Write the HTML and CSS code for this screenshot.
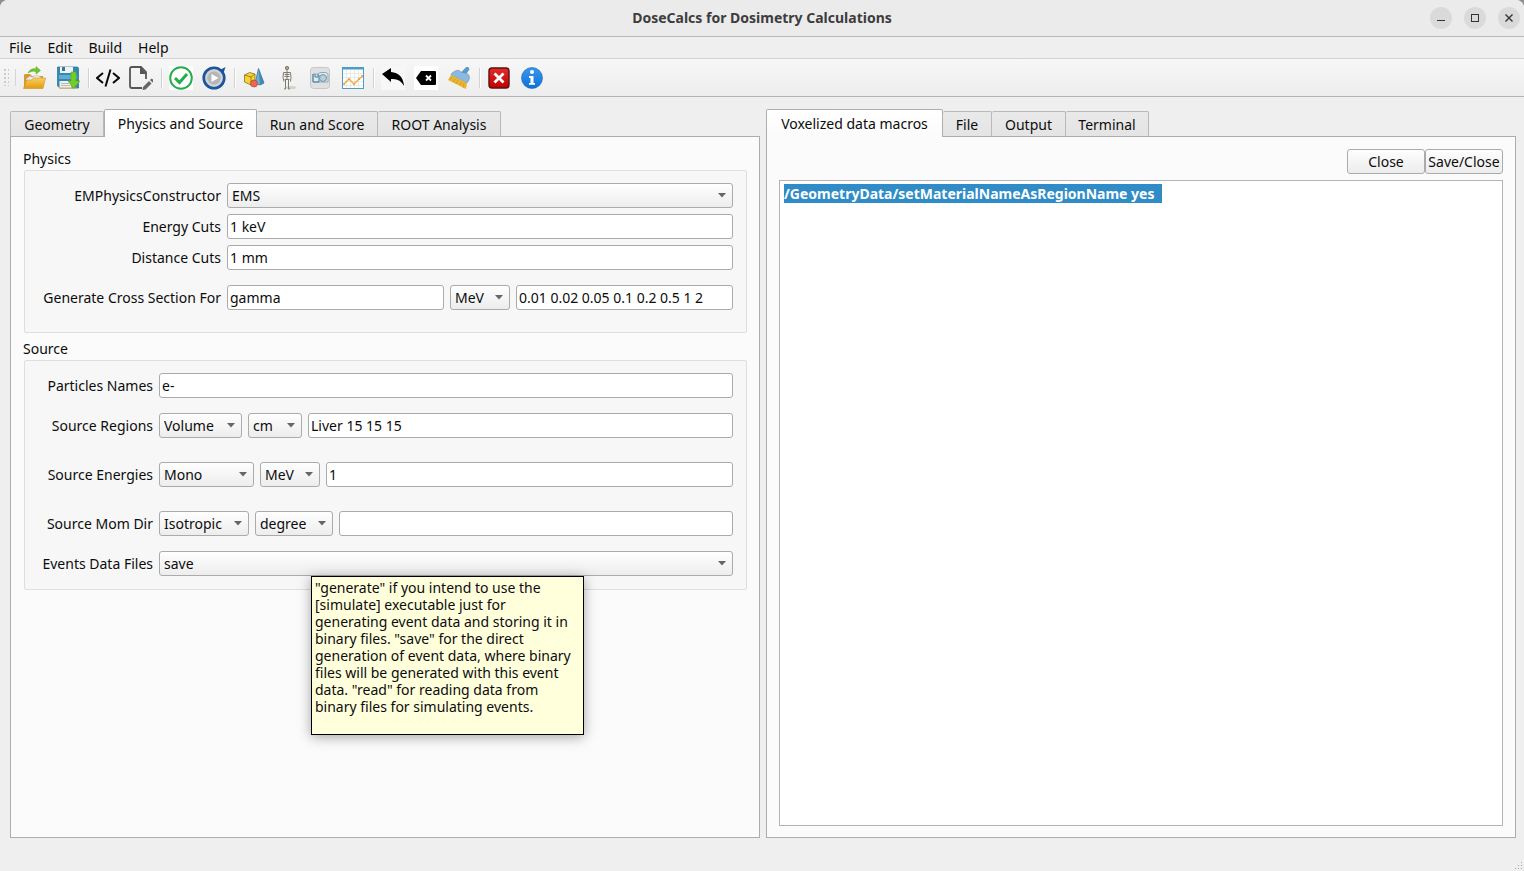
FILE: index.html
```
<!DOCTYPE html>
<html lang="en">
<head>
<meta charset="utf-8">
<title>DoseCalcs for Dosimetry Calculations</title>
<link rel="stylesheet" href="styles.css">
</head>
<body>
<div class="window">
  <header class="titlebar">
    <h1 class="title">DoseCalcs for Dosimetry Calculations</h1>
    <div class="window-buttons">
      <button class="winbtn" aria-label="Minimize"><svg width="22" height="22" viewBox="0 0 22 22"><path d="M7 13.500h8" stroke="#333" fill="none"/></svg></button>
      <button class="winbtn" aria-label="Maximize"><svg width="22" height="22" viewBox="0 0 22 22"><rect x="7.500" y="7.500" width="7" height="7" stroke="#333" fill="none"/></svg></button>
      <button class="winbtn" aria-label="Close window"><svg width="22" height="22" viewBox="0 0 22 22"><path d="M7.500 7.500l7 7M14.500 7.500l-7 7" stroke="#333" stroke-width="1.400" fill="none"/></svg></button>
    </div>
  </header>
  <nav class="menubar">
    <button class="menu">File</button><button class="menu">Edit</button><button class="menu">Build</button><button class="menu">Help</button>
  </nav>
  <div class="toolbar" role="toolbar">
    <span class="grip"></span>
    <button class="tool" aria-label="Open"><svg width="24" height="24" viewBox="0 0 24 24"><defs><linearGradient id="fold" x1="0" y1="0" x2="0" y2="1"><stop offset="0" stop-color="#f9cf62"/><stop offset="1" stop-color="#e29c10"/></linearGradient></defs><path d="M1 22V9l1-1h5l2 2h11v12z" fill="#d59a2c"/><path d="M3 13l4-3 2 1 5-2 5 3v3H3z" fill="#e8edf0" stroke="#aaa" stroke-width=".5"/><path d="M.5 22.500L3.500 14h5l2-2h12L20 22.500z" fill="url(#fold)" stroke="#d4921b" stroke-width=".6"/><path d="M5 7c2-4 5-5 8-4V.5L17.500 4.500 13 8V5.500C10 5 8 5 5 7z" fill="#6cc82b" stroke="#56a81f" stroke-width=".5"/></svg></button>
    <button class="tool" aria-label="Save"><svg width="24" height="24" viewBox="0 0 24 24"><path d="M1.500 1h20l1 1v20H4l-2.500-2z" fill="#3389b4" stroke="#246f96" stroke-width=".7"/><path d="M4 1h13v6H4z" fill="#eef3f5"/><path d="M6 1h3v4H6z" fill="#39779a"/><path d="M3 9h18v4H3z" fill="#62acd0"/><path d="M3.500 15h12v7h-12z" fill="#eee"/><path d="M5 17.500h8M5 19.500h9" stroke="#bbb"/><path d="M3 22h18" stroke="#d8a94e"/><path d="M15 6h5v9h4l-6.500 7.500L12 15h3z" fill="#72cd25" stroke="#58ad19" stroke-width=".6"/></svg></button>
    <span class="sep"></span>
    <button class="tool" aria-label="Show code"><svg width="24" height="24" viewBox="0 0 24 24"><path d="M7 7l-6 5 6 5M17 7l6 5-6 5M14.500 3.500l-5 17" fill="none" stroke="#080808" stroke-width="2"/></svg></button>
    <button class="tool" aria-label="Edit file"><svg width="24" height="24" viewBox="0 0 24 24"><path d="M13 22H3Q1 22 1 20V3Q1 1 3 1h9l5 5v7" fill="none" stroke="#555" stroke-width="1.800"/><path d="M11 1l7 7h-7z" fill="#555"/><path d="M14 21l6-6 2.500 2.500-6 6-3 .5zM21 14l1-1q1-.5 2 .5t.5 2L23.500 16.500z" fill="#666"/></svg></button>
    <span class="sep"></span>
    <button class="tool" aria-label="Check"><svg width="24" height="24" viewBox="0 0 24 24"><path d="M0 0h24v24H0z" fill="#fff"/><circle cx="12" cy="12" r="10.800" fill="#fff" stroke="#25ad4b" stroke-width="2"/><path d="M6 12l4.500 4.500L18 8" fill="none" stroke="#25ad4b" stroke-width="3"/></svg></button>
    <button class="tool" aria-label="Run"><svg width="24" height="24" viewBox="0 0 24 24"><defs><radialGradient id="disc"><stop offset="0" stop-color="#aaa"/><stop offset=".8" stop-color="#d6d6d6"/><stop offset="1" stop-color="#8c9199"/></radialGradient></defs><path d="M18 4l5.500-3-2 6z" fill="#214f91"/><circle cx="12" cy="12" r="10.300" fill="url(#disc)" stroke="#1c559f" stroke-width="2.600"/><circle cx="12" cy="12" r="6.500" fill="#b4b6b9"/><path d="M9.500 8l7 4-7 4z" fill="#fff"/></svg></button>
    <span class="sep"></span>
    <button class="tool" aria-label="Geometry shapes"><svg width="24" height="24" viewBox="0 0 24 24"><path d="M16.500 2.500l5.500 14.500-4 2-5-1.500z" fill="#6db1d9" stroke="#33647f" stroke-width=".7"/><path d="M16.500 2.500l1.500 16.500 4-2z" fill="#4288b3"/><path d="M2.500 9l5-2.500L13 8v8l-4 3-6.500-3z" fill="#f7d235" stroke="#77641d" stroke-width=".7"/><path d="M2.500 9l6.500 2 4-3M9 11v8" fill="none" stroke="#77641d" stroke-width=".7"/><circle cx="12" cy="17.500" r="3.500" fill="#f0674f" stroke="#9c3c2b" stroke-width=".6"/></svg></button>
    <button class="tool" aria-label="Phantom"><svg width="24" height="24" viewBox="0 0 24 24"><ellipse cx="16" cy="21.500" rx="5" ry="1.500" fill="#d0d0d0"/><g fill="none" stroke="#817b6c"><circle cx="12" cy="2" r="1.700" fill="#aaa490"/><path d="M12 4v10M8.500 6.500h7M9.500 8.500h5M9.500 10.500h5M8.500 6.500l-.5 5 1 4M15.500 6.500l.5 5-.5 4M9.500 13.500h5M10.500 14v9H9M13.500 14v9H15"/></g></svg></button>
    <button class="tool" aria-label="Capture view"><svg width="24" height="24" viewBox="0 0 24 24"><rect x="2.500" y="1.500" width="19" height="21" rx="3" fill="#e0e0e0" stroke="#c7c7c7"/><path d="M5 8h5l2-1.500h6l2 1.500v8H5z" fill="#dcebf2" stroke="#8aabbd"/><path d="M5 8v8h6V9M7 8v3h3V8" fill="none" stroke="#477c9c"/><circle cx="15" cy="12" r="3.500" fill="#b8ced9" stroke="#7796a6"/></svg></button>
    <button class="tool" aria-label="Graph"><svg width="24" height="24" viewBox="0 0 24 24"><rect x="1.500" y="1.500" width="21" height="21" fill="#fff" stroke="#4b9cc6"/><path d="M1 2.500h22" stroke="#4b9cc6" stroke-width="2"/><path d="M5.500 4v18M9.500 4v18M13.500 4v18M17.500 4v18M2 7.500h20M2 11.500h20M2 15.500h20M2 19.500h20" stroke="#ddd" stroke-width=".6"/><path d="M3 18l5-5 5 5 5-5 4-3" fill="none" stroke="#efae36" stroke-width="1.300"/><g fill="#ee9846"><circle cx="3" cy="18" r="1"/><circle cx="8" cy="13" r="1"/><circle cx="13" cy="18" r="1"/><circle cx="18" cy="13" r="1"/><circle cx="21" cy="10" r="1"/></g></svg></button>
    <span class="sep"></span>
    <button class="tool" aria-label="Undo"><svg width="24" height="24" viewBox="0 0 24 24"><path d="M0 0h24v24H0z" fill="#f7f7f7"/><path d="M1 8l9-6v4q12 1 13 14-4-8-13-7v3z" fill="#000"/></svg></button>
    <button class="tool" aria-label="Clear"><svg width="24" height="24" viewBox="0 0 24 24"><path d="M0 0h24v24H0z" fill="#fff"/><path d="M2 12l5-7h14q1 0 1 1v12q0 1-1 1H7z" fill="#000"/><path d="M12 9.500l5 5M17 9.500l-5 5" stroke="#fff" stroke-width="1.800"/></svg></button>
    <button class="tool" aria-label="Clean"><svg width="24" height="24" viewBox="0 0 24 24"><path d="M14 7l5-5.500q3-1 3 2L18 9z" fill="#5b9bd1" stroke="#3b78ae" stroke-width=".5"/><path d="M5 7q6-5 9-1l4 1q6 1 4 7l-2 3L4 9z" fill="#8bb9e0" stroke="#5684b0" stroke-width=".5"/><path d="M4 9l16 8-1 6L1 14z" fill="#e9b52f"/><path d="M5 11l-2 3M8 13l-2 3M11 14l-2 4M14 16l-1 4M17 17l-1 5" stroke="#c9941e" stroke-width=".6"/></svg></button>
    <span class="sep"></span>
    <button class="tool" aria-label="Exit"><svg width="24" height="24" viewBox="0 0 24 24"><defs><linearGradient id="red" x1="0" y1="0" x2="0" y2="1"><stop offset="0" stop-color="#e12d2d"/><stop offset="1" stop-color="#c00000"/></linearGradient></defs><rect x="2" y="2" width="20" height="20" rx="3" fill="url(#red)" stroke="#5d1010" stroke-width="1.400"/><path d="M7.500 7.500l9 9M16.500 7.500l-9 9" stroke="#fff" stroke-width="2.800"/></svg></button>
    <button class="tool" aria-label="About"><svg width="24" height="24" viewBox="0 0 24 24"><defs><linearGradient id="blue" x1="0" y1="0" x2="0" y2="1"><stop offset="0" stop-color="#3b97ec"/><stop offset="1" stop-color="#0b72da"/></linearGradient></defs><circle cx="12" cy="12" r="10.500" fill="url(#blue)" stroke="#1766b7" stroke-width=".6"/><circle cx="12" cy="6" r="2" fill="#fff"/><path d="M9 10h4.500v7H15v1.800H9V17h1.500v-5H9z" fill="#fff"/></svg></button>
  </div>

  <main class="workspace">
    <section class="pane">
      <div class="tabs" role="tablist">
        <button class="tab w-geometry" role="tab">Geometry</button>
        <button class="tab w-physics active" role="tab" aria-selected="true">Physics and Source</button>
        <button class="tab w-run" role="tab">Run and Score</button>
        <button class="tab w-root" role="tab">ROOT Analysis</button>
      </div>
      <div class="page">
        <h2 class="group-title">Physics</h2>
        <div class="group physics">
          <div class="row"><label for="em">EMPhysicsConstructor</label><select id="em" class="grow"><option>EMS</option></select></div>
          <div class="row"><label for="ecut">Energy Cuts</label><input id="ecut" type="text" value="1 keV"></div>
          <div class="row"><label for="dcut">Distance Cuts</label><input id="dcut" type="text" value="1 mm"></div>
          <div class="row spaced"><label for="cross">Generate Cross Section For</label><input id="cross" type="text" value="gamma"><select class="w-mev" aria-label="Cross section unit"><option>MeV</option></select><input type="text" aria-label="Cross section energies" value="0.01 0.02 0.05 0.1 0.2 0.5 1 2"></div>
        </div>
        <h2 class="group-title">Source</h2>
        <div class="group source">
          <div class="row"><label for="part">Particles Names</label><input id="part" type="text" value="e-"></div>
          <div class="row spaced"><label for="reg">Source Regions</label><select id="reg" class="w-volume"><option>Volume</option></select><select class="w-cm" aria-label="Length unit"><option>cm</option></select><input type="text" aria-label="Region values" value="Liver 15 15 15"></div>
          <div class="row wide-spaced"><label for="ene">Source Energies</label><select id="ene" class="w-mono"><option>Mono</option></select><select class="w-mev" aria-label="Energy unit"><option>MeV</option></select><input type="text" aria-label="Energy values" value="1"></div>
          <div class="row wide-spaced"><label for="mom">Source Mom Dir</label><select id="mom" class="w-iso"><option>Isotropic</option></select><select class="w-degree" aria-label="Angle unit"><option>degree</option></select><input type="text" aria-label="Direction values"></div>
          <div class="row spaced tip-anchor"><label for="evt">Events Data Files</label><select id="evt" class="grow" aria-describedby="tip"><option>save</option></select>
            <div class="tooltip" id="tip" role="tooltip">"generate" if you intend to use the<br>[simulate] executable just for<br>generating event data and storing it in<br>binary files. "save" for the direct<br>generation of event data, where binary<br>files will be generated with this event<br>data. "read" for reading data from<br>binary files for simulating events.</div>
          </div>
        </div>
      </div>
    </section>

    <section class="pane">
      <div class="tabs" role="tablist">
        <button class="tab w-voxel active" role="tab" aria-selected="true">Voxelized data macros</button>
        <button class="tab w-file" role="tab">File</button>
        <button class="tab w-output" role="tab">Output</button>
        <button class="tab w-terminal" role="tab">Terminal</button>
      </div>
      <div class="page page-editor">
        <div class="actions"><button class="push">Close</button><button class="push">Save/Close</button></div>
        <textarea class="editor" id="editor" aria-label="Macros" spellcheck="false">/GeometryData/setMaterialNameAsRegionName yes  </textarea>
      </div>
    </section>
  </main>
  <footer class="statusbar"><svg width="8" height="8" viewBox="0 0 8 8"><path d="M6 0h1v1H6zM3 3h1v1H3zM6 3h1v1H6zM0 6h1v1H0zM3 6h1v1H3zM6 6h1v1H6z" fill="#aaa"/></svg></footer>
</div>
<script src="script.js"></script>
</body>
</html>
```
FILE: styles.css
```
* { box-sizing: border-box; }
body {
  margin: 0;
  background: #8f8f8f;
  color: #0c0c0c;
  font: 14px/20px "Noto Sans", "Open Sans", sans-serif;
}
button, input, select, textarea { font: inherit; color: inherit; margin: 0; }
.window {
  display: flex;
  flex-direction: column;
  height: 100vh;
  background: #efefef;
  border-radius: 8px 8px 0 0;
  overflow: hidden;
}

.titlebar {
  display: grid;
  grid-template-columns: 1fr auto 1fr;
  align-items: center;
  height: 37px;
  background: #ebebeb;
  border-bottom: 1px solid #bababa;
}
.title { grid-column: 2; margin: 0; font-size: 14px; line-height: 20px; font-weight: 700; color: #3d3d3d; }
.window-buttons { display: flex; justify-content: flex-end; gap: 12px; padding-right: 4px; }
.winbtn { display: flex; width: 22px; height: 22px; padding: 0; border: 0; border-radius: 50%; background: #dadada; }

.menubar { display: flex; gap: 16px; height: 22px; padding-left: 9px; border-bottom: 1px solid #d3d3d3; }
.menu { padding: 0; border: 0; background: none; line-height: 20px; }

.toolbar {
  display: flex;
  align-items: center;
  height: 38px;
  background: linear-gradient(#f7f7f7, #ededed);
  border-bottom: 1px solid #b4b4b4;
}
.grip {
  width: 12px;
  height: 17px;
  margin: 0 2px 0 4px;
  border-right: 1px solid #d5d5d5;
  background: radial-gradient(circle at 1px 1px, #ccc 1px, transparent 1px) 0 0 / 4px 4px;
  background-clip: content-box;
  padding-right: 6px;
}
.tool { display: flex; align-items: center; justify-content: center; width: 33px; height: 33px; padding: 0; border: 0; background: none; }
.sep { width: 2px; height: 20px; margin: 0 1px 0 4px; border-left: 1px solid #d2d2d2; border-right: 1px solid #fff; }

.workspace { flex: 1; display: flex; gap: 6px; min-height: 0; padding: 12px 8px 0 10px; }
.pane { flex: 1; display: flex; flex-direction: column; min-width: 0; }
.tabs { display: flex; align-items: flex-end; }
.tab {
  height: 25px;
  padding: 2px 0 0;
  border: 1px solid #b9b9b9;
  border-left-width: 0;
  border-bottom: 0;
  border-radius: 2px 2px 0 0;
  background: linear-gradient(#e9e9e9, #e4e4e4);
  white-space: nowrap;
}
.tab:first-child { border-left-width: 1px; }
.tab.active {
  z-index: 1;
  height: 28px;
  margin-bottom: -1px;
  padding: 0;
  border-left-width: 1px;
  border-color: #aeaeae;
  background: linear-gradient(#fff, #fbfbfb);
}
.w-geometry { width: 94px; }
.w-physics { width: 153px; }
.w-run { width: 121px; }
.w-root { width: 123px; }
.w-voxel { width: 177px; }
.w-file { width: 49px; }
.w-output { width: 74px; }
.w-terminal { width: 83px; }

.page {
  flex: 1;
  display: flex;
  flex-direction: column;
  min-height: 0;
  padding: 12px;
  border: 1px solid #adadad;
  background: #fbfbfb;
}
.page-editor { padding-bottom: 11px; }
.group-title { margin: 0; font-size: 14px; line-height: 20px; font-weight: 400; }
.group {
  display: flex;
  flex-direction: column;
  gap: 6px;
  margin: 1px 0 6px 1px;
  padding: 12px 13px 12px 12px;
  border: 1px solid #dedede;
  border-radius: 2px;
  background: #f7f7f7;
}
.physics { padding-bottom: 22px; }
.source { padding-bottom: 13px; }
.row { display: flex; gap: 6px; }
.row label { flex: none; line-height: 25px; text-align: right; white-space: nowrap; }
.physics label { width: 184px; }
.source label { width: 116px; }
.spaced { margin-top: 9px; }
.wide-spaced { margin-top: 18px; }

input, select {
  height: 25px;
  border: 1px solid #ababab;
  border-radius: 3px;
}
input { flex: 1; min-width: 0; padding: 0 2px; background: #fff; }
select {
  appearance: none;
  padding: 0 4px;
  background:
    url("data:image/svg+xml,%3Csvg xmlns='http://www.w3.org/2000/svg' width='8' height='5'%3E%3Cpath d='M0 0h8L4 4.500z' fill='%23666'/%3E%3C/svg%3E") no-repeat right 6px center,
    linear-gradient(#fefefe, #ededed);
}
.grow { flex: 1; }
.w-mev { width: 60px; }
.w-volume { width: 83px; }
.w-cm { width: 54px; }
.w-mono { width: 95px; }
.w-iso { width: 90px; }
.w-degree { width: 78px; }

.tip-anchor { position: relative; }
.tooltip {
  position: absolute;
  top: 25px;
  left: 274px;
  width: 273px;
  padding: 2px 3px 19px;
  border: 1px solid #000;
  background: #ffffdc;
  line-height: 17px;
  white-space: nowrap;
  box-shadow: 0 2px 12px rgba(0, 0, 0, .35);
}

.actions { display: flex; justify-content: flex-end; margin-bottom: 6px; }
.push {
  width: 78px;
  height: 25px;
  padding: 0;
  border: 1px solid #ababab;
  border-radius: 3px;
  background: linear-gradient(#fefefe, #ececec);
  white-space: nowrap;
}
.editor {
  flex: 1;
  padding: 4px;
  border: 1px solid #b4b4b4;
  outline: 0;
  resize: none;
  background: #fff;
  font-weight: 700;
  line-height: 18px;
}
.editor::selection { background: #308cc6; color: #fff; }

.statusbar { display: flex; flex: none; justify-content: flex-end; align-items: flex-end; height: 33px; padding: 0 1px 1px; }
```
FILE: script.js
```
const editor = document.getElementById('editor');
editor.focus();
editor.select();
```
